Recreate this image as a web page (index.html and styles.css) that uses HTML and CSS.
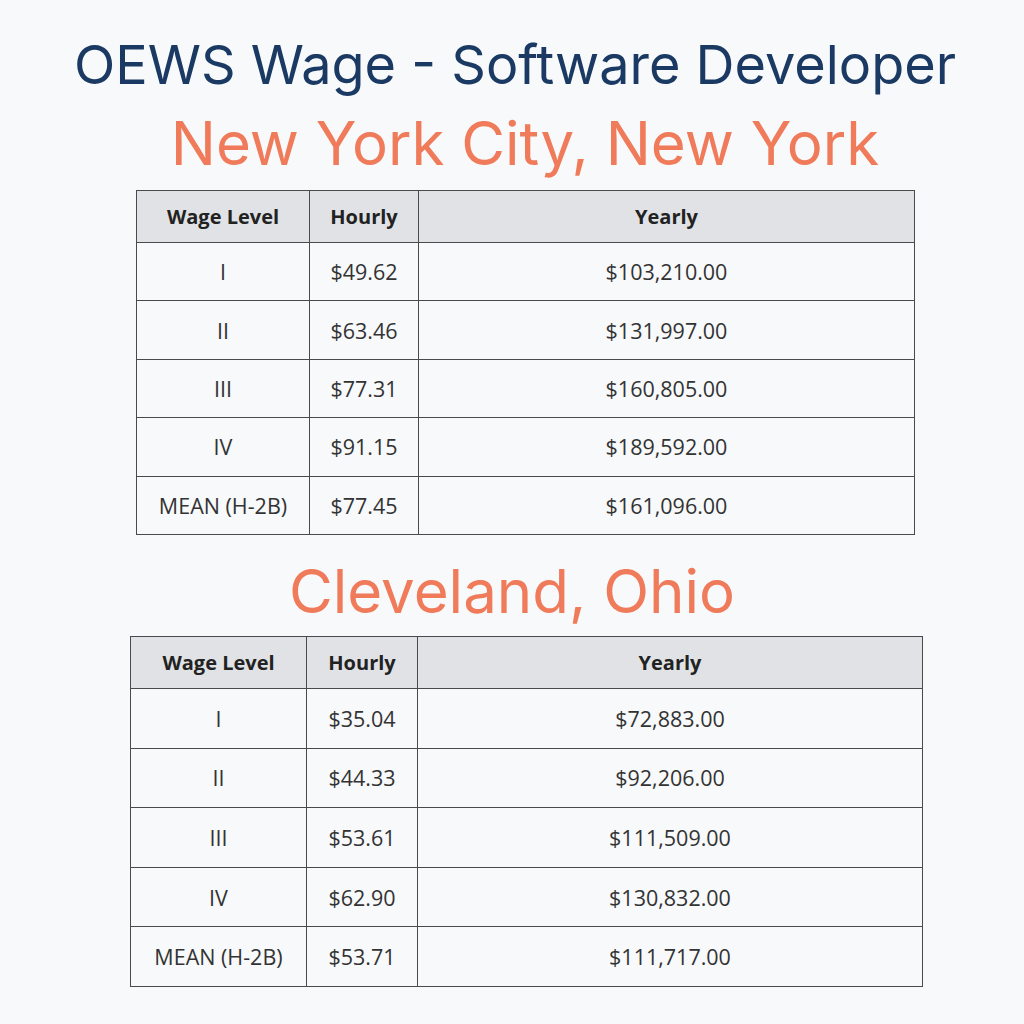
FILE: index.html
```html
<!DOCTYPE html>
<html lang="en">
<head>
<meta charset="utf-8">
<link rel="stylesheet" href="styles.css">
</head>
<body>
<main class="page">
  <h1 class="title">OEWS Wage - Software Developer</h1>
  <h2 class="city city-ny">New York City, New York</h2>
  <table class="wage wage-ny">
    <thead>
      <tr><th class="c1">Wage Level</th><th class="c2">Hourly</th><th class="c3">Yearly</th></tr>
    </thead>
    <tbody>
      <tr><td>I</td><td>$49.62</td><td>$103,210.00</td></tr>
      <tr><td>II</td><td>$63.46</td><td>$131,997.00</td></tr>
      <tr><td>III</td><td>$77.31</td><td>$160,805.00</td></tr>
      <tr><td>IV</td><td>$91.15</td><td>$189,592.00</td></tr>
      <tr><td>MEAN (H-2B)</td><td>$77.45</td><td>$161,096.00</td></tr>
    </tbody>
  </table>
  <h2 class="city city-cle">Cleveland, Ohio</h2>
  <table class="wage wage-cle">
    <thead>
      <tr><th class="c1">Wage Level</th><th class="c2">Hourly</th><th class="c3">Yearly</th></tr>
    </thead>
    <tbody>
      <tr><td>I</td><td>$35.04</td><td>$72,883.00</td></tr>
      <tr><td>II</td><td>$44.33</td><td>$92,206.00</td></tr>
      <tr><td>III</td><td>$53.61</td><td>$111,509.00</td></tr>
      <tr><td>IV</td><td>$62.90</td><td>$130,832.00</td></tr>
      <tr><td>MEAN (H-2B)</td><td>$53.71</td><td>$111,717.00</td></tr>
    </tbody>
  </table>
</main>
</body>
</html>
```
FILE: styles.css
```css
html, body {
  margin: 0;
  padding: 0;
  background: #f8f9fb;
}
.page {
  width: 1024px;
  height: 1024px;
  padding-top: 38px;
  box-sizing: border-box;
  display: flex;
  flex-direction: column;
  font-family: Inter, "Noto Sans", sans-serif;
}
.title {
  margin: 0 0 21px 0;
  padding-left: 6px;
  font-size: 54px;
  line-height: 1;
  font-weight: 400;
  color: #1b3a63;
  text-align: center;
}
.city {
  margin: 0;
  font-size: 60px;
  line-height: 1;
  font-weight: 400;
  color: #f07b5b;
  text-align: center;
}
.city-ny {
  padding-left: 26px;
  margin-bottom: 17px;
}
.city-cle {
  margin-top: 26px;
  margin-bottom: 15px;
}
.wage {
  border-collapse: collapse;
  font-family: "Open Sans", sans-serif;
  font-size: 21.5px;
  color: #333;
  table-layout: fixed;
}
.wage th, .wage td {
  border: 1px solid #4a4a4a;
  text-align: center;
  padding: 0;
}
.wage th {
  background: #e1e2e5;
  font-weight: 700;
  color: #222;
  font-size: 20px;
}
.wage thead tr {
  height: 52px;
}
.wage-ny {
  margin-left: 136px;
  width: 779px;
}
.wage-ny .c1 { width: 172px; }
.wage-ny .c2 { width: 108px; }
.wage-ny tbody tr { height: 58.4px; }
.wage-cle {
  margin-left: 130px;
  width: 793px;
}
.wage-cle .c1 { width: 175px; }
.wage-cle .c2 { width: 110px; }
.wage-cle tbody tr { height: 59.6px; }
```
